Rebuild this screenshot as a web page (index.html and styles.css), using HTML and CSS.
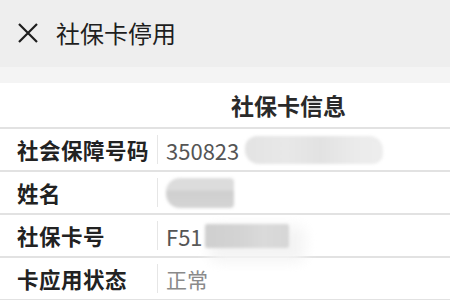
FILE: index.html
```html
<!DOCTYPE html>
<html lang="zh-CN">
<head>
<meta charset="utf-8">
<link rel="stylesheet" href="styles.css">
</head>
<body>
<div class="header">
  <svg class="close" width="22" height="22" viewBox="0 0 22 22"><path d="M2 2 L20 20 M20 2 L2 20" stroke="#1e1e1e" stroke-width="2.2" fill="none"/></svg>
  <span class="title">社保卡停用</span>
</div>
<div class="band"></div>
<div class="card">
  <div class="caption">社保卡信息</div>
  <div class="row">
    <div class="label">社会保障号码</div>
    <div class="value">350823<span class="mask mask1"></span></div>
  </div>
  <div class="row">
    <div class="label">姓名</div>
    <div class="value"><span class="mask mask2"></span></div>
  </div>
  <div class="row">
    <div class="label">社保卡号</div>
    <div class="value">F51<span class="mask mask3"></span></div>
  </div>
  <div class="row">
    <div class="label">卡应用状态</div>
    <div class="value light">正常</div>
  </div>
</div>
</body>
</html>
```
FILE: styles.css
```css
html, body {
  margin: 0;
  padding: 0;
  background: #ffffff;
  font-family: "Noto Sans CJK SC", "Noto Sans", sans-serif;
  overflow: hidden;
}
.header {
  height: 67px;
  background: #eeeeee;
  display: flex;
  align-items: center;
  padding-left: 17px;
  gap: 17px;
}
.close {
  display: block;
  margin-top: -1px;
}
.title {
  font-size: 24px;
  color: #1e1e1e;
  line-height: 1;
  margin-top: -1px;
}
.band {
  height: 16px;
  background: #f4f4f4;
}
.caption {
  height: 44px;
  line-height: 44px;
  font-size: 23px;
  font-weight: bold;
  color: #2a2a2a;
  padding-left: 231px;
  border-bottom: 2px solid #e2e2e2;
}
.row {
  display: flex;
  height: 41px;
  align-items: stretch;
  border-bottom: 2px solid #e2e2e2;
}
.label {
  width: 140px;
  padding-left: 17px;
  font-size: 21.5px;
  font-weight: bold;
  color: #222222;
  display: flex;
  align-items: center;
  letter-spacing: 0.5px;
}
.value {
  flex: 1;
  margin: 6px 0;
  border-left: 1px solid #e6e6e6;
  padding-left: 8px;
  display: flex;
  align-items: center;
  font-size: 22px;
  color: #555555;
}
.value.light {
  color: #8a8a8a;
  font-size: 21px;
}
.mask {
  display: inline-block;
  filter: blur(1.5px);
}
.mask1 {
  width: 138px;
  height: 28px;
  margin-left: 6px;
  border-radius: 12px 14px 10px 14px;
  background: linear-gradient(90deg, #e3e3e3 0%, #e8e8e8 30%, #e2e2e2 55%, #ebebeb 80%, #ededed 100%);
}
.mask2 {
  width: 68px;
  height: 30px;
  margin-left: 0;
  border-radius: 14px 4px 4px 14px;
  background: linear-gradient(180deg, #dcdcdc 0%, #dcdcdc 40%, #cfcfcf 45%, #d4d4d4 100%);
}
.mask3 {
  width: 84px;
  height: 24px;
  margin-left: 2px;
  border-radius: 2px;
  background: linear-gradient(90deg, #cfcfcf 0%, #d3d3d3 40%, #dadada 70%, #d6d6d6 100%);
  box-shadow: 10px 8px 14px 6px #f4f4f4;
}
```
